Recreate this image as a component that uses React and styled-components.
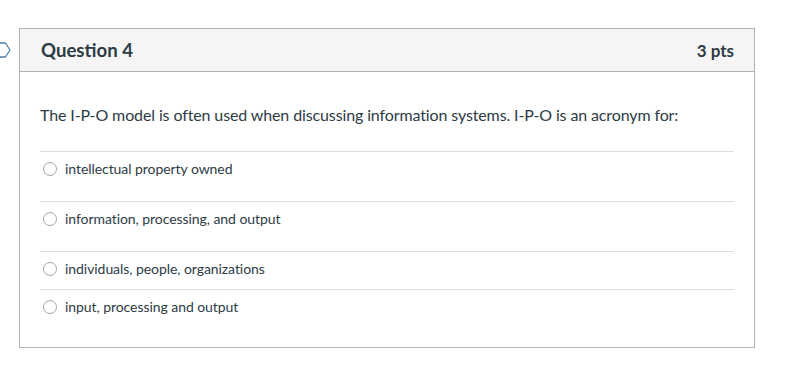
import styled, { createGlobalStyle } from 'styled-components'

const GlobalStyle = createGlobalStyle`
  body {
    margin: 0;
    background: #fff;
    font-family: Lato, "Open Sans", "Liberation Sans", sans-serif;
    color: #2d3b45;
  }
`

const Page = styled.div`
  display: flex;
  align-items: flex-start;
  gap: 8px;
  padding-top: 28px;
`

const Flag = styled.svg`
  display: block;
  width: 11px;
  height: 16px;
  margin-top: 14px;
  flex: none;
`

const Card = styled.section`
  width: 736px;
  box-sizing: border-box;
  border: 1px solid #b3b3b3;
`

const Header = styled.header`
  height: 42px;
  display: flex;
  align-items: center;
  justify-content: space-between;
  padding: 0 20px 0 21px;
  background: #f5f5f5;
  border-bottom: 1px solid #b3b3b3;
`

const Title = styled.h2`
  margin: 0;
  font-size: 18.6px;
  font-weight: 700;
  color: #2d3b45;
`

const Points = styled.span`
  font-size: 17px;
  font-weight: 700;
  color: #2d3b45;
`

const Body = styled.div`
  padding: 31px 20px 20px;
`

const Prompt = styled.p`
  margin: 0 0 24px;
  font-size: 16px;
  line-height: 24px;
  letter-spacing: -0.12px;
`

const Answer = styled.label`
  display: flex;
  align-items: center;
  border-top: 1px solid #dcdcdc;
  padding: 8px 0 ${p => (p.$tall ? 23 : 11)}px;
  font-size: 14px;
  line-height: 18px;
  letter-spacing: -0.06px;
  cursor: pointer;
`

const Radio = styled.span`
  width: 14px;
  height: 14px;
  box-sizing: border-box;
  margin: 0 8px 0 3px;
  border: 1px solid #a6a6a6;
  border-radius: 50%;
  background: #fff;
  flex: none;
`

const answers = [
  { text: 'intellectual property owned', tall: true },
  { text: 'information, processing, and output', tall: true },
  { text: 'individuals, people, organizations' },
  { text: 'input, processing and output' },
]

export default function App() {
  return (
    <>
      <GlobalStyle />
      <Page>
        <Flag viewBox="0 0 11 16">
          <path
            d="M0 1 H5.5 L10 8 L5.5 15 H0"
            fill="none"
            stroke="#4d7fa8"
            strokeWidth="1.3"
            strokeLinejoin="round"
          />
        </Flag>
        <Card>
          <Header>
            <Title>Question 4</Title>
            <Points>3 pts</Points>
          </Header>
          <Body>
            <Prompt>
              The I-P-O model is often used when discussing information systems. I-P-O is an
              acronym for:
            </Prompt>
            {answers.map(a => (
              <Answer key={a.text} $tall={a.tall}>
                <Radio />
                {a.text}
              </Answer>
            ))}
          </Body>
        </Card>
      </Page>
    </>
  )
}
